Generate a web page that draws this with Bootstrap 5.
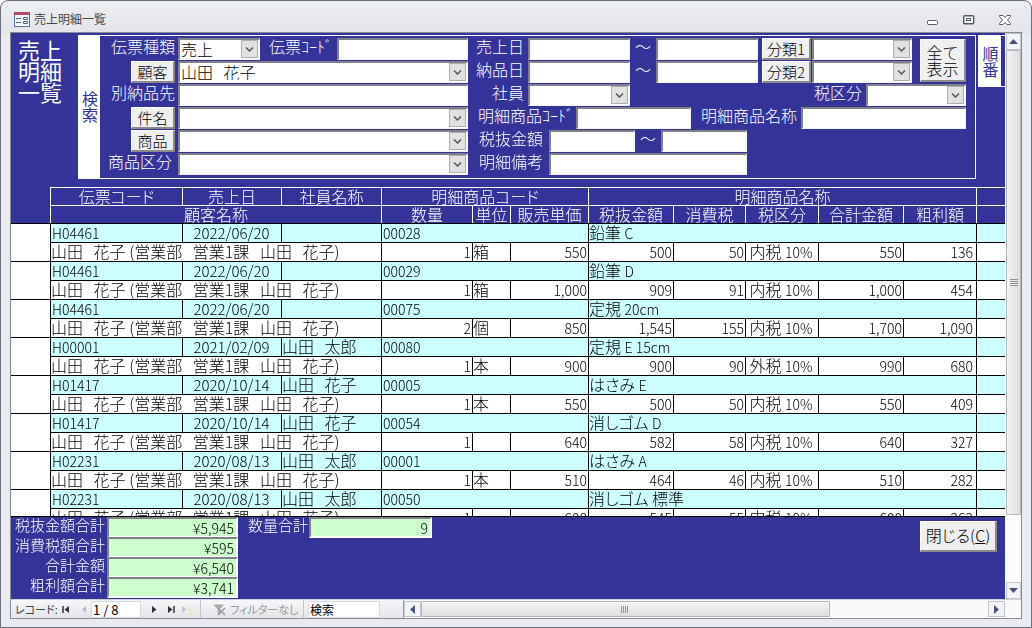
<!DOCTYPE html>
<html lang="ja">
<head>
<meta charset="utf-8">
<meta name="viewport" content="width=device-width, initial-scale=1">
<title>売上明細一覧</title>
<link href="https://cdn.jsdelivr.net/npm/bootstrap@5.3.0/dist/css/bootstrap.min.css" rel="stylesheet">
<style>
  :root { --navy: #333399; --mint: #ccffcc; --aqua: #ccffff; --face: #efefef; }
  html, body { height: 100%; }
  body { background: #fff; color: #000; font-family: "Noto Sans CJK JP", sans-serif; font-size: 16px; font-weight: 300; line-height: 16px; }
  button, input, select { font: inherit; color: inherit; }
  .win { height: 100vh; border: 1px solid #68707c; border-radius: 8px 8px 0 0; background: linear-gradient(#eceef1, #e3e5ea 32px, #e9ebf0 33px); padding: 0 9px 8px; }
  .titlebar { height: 31px; font-size: 12px; font-weight: 400; color: #444; padding: 5px 11px 0 4px; }
  .wbtn { border: 0; background: none; padding: 0; width: 12px; height: 12px; display: flex; margin-top: 2px; }
  .client { border: 1px solid #868b98; background: #fff; min-height: 0; }
  .upper { min-height: 0; }
  .sheet { background: var(--navy); color: #fff; min-width: 0; }

  /* search header */
  .headband { height: 154px; padding-top: 2px; }
  .bigtitle { width: 67px; font-size: 22px; font-weight: 400; line-height: 21px; padding: 4px 12px 0 7px; margin: 0; }
  .vtab { background: #fff; color: #333399; font-weight: 400; text-align: center; }
  .vtab-search { width: 22px; height: 144px; padding: 55px 2px 0 4px; }
  .vtab-order { width: 23px; height: 52px; padding: 10px 2px 0 4px; margin-top: -1px; }
  .searchbox { height: 144px; border: 1px solid #fff; border-left: 0; padding-top: 2px; }
  .orderbox { border: 1px solid #fff; border-width: 1px 0; height: 52px; width: 27px; margin-left: 2px; }
  .pane { display: grid; row-gap: 1px; align-content: start; }
  .pane-left { width: 368px; margin-right: 1px; }
  .pane-right { width: 497px; }
  .frow { display: flex; height: 22px; align-items: stretch; }
  .frow > label, .tilde { white-space: nowrap; }
  .fld { border: 2px solid; border-color: #80808a #f4f4f8 #f4f4f8 #80808a; border-right-width: 1px; border-bottom-width: 1px; background: #fff; color: #000; border-radius: 0; padding: 0 0 2px 1px; height: 22px; min-width: 0; outline: 0; }
  .dd { appearance: none; padding-right: 20px; background: #fff url("data:image/svg+xml,%3Csvg xmlns='http://www.w3.org/2000/svg' width='17' height='18'%3E%3Crect x='.5' y='.5' width='16' height='17' fill='%23e1e1e1' stroke='%23adadad'/%3E%3Cpath d='M5 7.500l3.500 3.500L12 7.500' fill='none' stroke='%23555' stroke-width='1.500'/%3E%3C/svg%3E") no-repeat right 1px top 0; }
  .push { background: var(--face); color: #000; border: 1px solid; border-color: #fff #8a8a8a #8a8a8a #fff; border-bottom-width: 2px; border-right-width: 2px; border-radius: 0; padding: 0; }
  .keyed { margin-left: 3px; }
  .w-key { width: 75px; text-align: right; }
  .keybtn { width: 44px; height: 22px; font-size: 15px; }
  .slip { padding: 0 4px 0 9px; }
  .w-0x { width: 0; }
  .wide { padding-right: 3px; }
  .w-mid { width: 59px; text-align: right; padding-right: 4px; }
  .tilde { width: 26px; text-align: center; }
  .w-s { width: 82px; }
  .w-date { width: 102px; }
  .w-opt { width: 100px; }
  .w-num { width: 86px; }
  .w-code { width: 115px; }
  .w-cls { width: 49px; margin: 0 1px 0 4px; font-size: 15px; }
  .w-long { width: 107px; padding-left: 9px; }
  .w-amt { width: 80px; padding-left: 10px; }
  .w-name { width: 165px; }
  .w-note { width: 198px; }
  .showall { width: 46px; height: 43px; margin: 1px 0 0 8px; }
  .pk { font-feature-settings: "palt"; }

  /* detail grid */
  .grid-table { width: 100%; table-layout: fixed; border-collapse: separate; border-spacing: 0; }
  .grid-table th, .grid-table td { padding: 0; font-weight: 300; border: 0 solid #000; border-width: 1px 0 0 1px; white-space: pre; vertical-align: top; }
  .grid-table thead th { border-color: #fff; height: 18px; line-height: 17px; text-align: center; }
  .grid-table .gutter { border-left: 0; }
  .grid-table thead .gutter { border-top: 0; }
  .grid-table tbody { color: #000; background: #fff; }
  .grid-table tbody td { height: 19px; line-height: 16px; }
  .grid-table tbody tr.top td:not(.gutter) { background: var(--aqua); }
  .grid-table tbody .n { text-align: right; font-size: 14px; line-height: 18px; padding-right: 1px; }
  .grid-table tbody .code { font-size: 14px; line-height: 18px; padding-left: 1px; }
  .grid-table tbody .date { text-align: center; font-size: 15px; padding-right: 1px; line-height: 18px; }
  .grid-table .sm { font-size: 14px; }
  .grid-table tbody .end { padding-right: 3px; }
  .records { flex: 1 1 0; min-height: 0; overflow: hidden; }

  /* totals */
  .foot { height: 83px; border-top: 1px solid #000; font-size: 15px; }
  .sumlabel { width: 94px; text-align: right; }
  .sum { display: block; height: 21px; border: 2px solid; border-color: #80808a #fff #fff #80808a; background: var(--mint); color: #000; text-align: right; font-size: 14px; padding: 0 2px 0 0; border-radius: 0; }
  .w-sum { width: 131px; margin-left: 2px; }
  .w-qty { width: 123px; }
  .srow { display: flex; height: 20px; }
  .qty { padding: 0 1px 0 10px; }
  .closebtn { width: 77px; height: 31px; margin: 4px 8px 0 0; padding-bottom: 3px; font-size: 16px; }

  /* record navigation and scroll bars */
  .navbarlow { height: 19px; background: linear-gradient(#f6f7f9, #e3e5ea); color: #444; font-size: 12px; font-weight: 400; border-top: 1px solid #cfd2da; }
  .navbarlow input { border: 1px solid #d5d8df; background: #fff; height: 17px; padding: 0 1px; color: #000; outline: 0; }
  .navbarlow button { border: 0; background: none; padding: 0; display: flex; }
  .recnav { width: 392px; flex: none; }
  .reclabel { width: 45px; padding-left: 4px; font-size: 11px; white-space: nowrap; }
  .recnav > button { margin-left: 6px; }
  .recnav > .b2 { margin-left: 12px; margin-right: 5px; }
  .recnav > .b3, .recnav > .b4 { margin-left: 11px; }
  .recnav > .b5 { margin-right: 4px; }
  .recnav > .recno { width: 50px; font-size: 13px; }
  .recnav > .find { width: 72px; margin-left: 4px; }
  .recnav > .filter { width: 80px; margin: 0 11px; gap: 4px; color: #999; align-items: center; font-size: 11px; white-space: nowrap; }
  .vline { width: 1px; height: 18px; background: #c5c8d0; }
  .sbtn { border: 1px solid #c3c5cc; background: #f3f4f6; padding: 0; display: flex; align-items: center; justify-content: center; }
  .vscroll .sbtn { height: 17px; }
  .navbarlow .hscroll .sbtn { width: 17px; border: 1px solid #c3c5cc; background: #f3f4f6; }
  .thumb { border: 1px solid #b4b6bc; border-radius: 1px; display: flex; align-items: center; justify-content: center; }
  .vscroll { width: 16px; flex: none; padding-left: 1px; background: #fcfcfd; }
  .vscroll .thumb { background: linear-gradient(90deg, #f5f5f5, #dedee0); flex: 0 1 465px; }
  .hscroll { background: #fafafb; border-left: 1px solid #9a9ea8; height: 18px; padding: 1px 0; }
  .hscroll .thumb { background: linear-gradient(#f5f5f5, #dedee0); width: 68%; }
  .corner { width: 16px; height: 18px; flex: none; background: #fafafb; }
</style>
</head>
<body>
<div class="win d-flex flex-column">
  <header class="titlebar d-flex align-items-center">
    <svg width="16" height="15" viewBox="0 0 16 15" aria-hidden="true"><rect x=".5" y=".5" width="15" height="14" fill="#f4f8ff" stroke="#5a6fa5"/><path d="M0 0h16v3H0z" fill="#b5476b"/><path d="M2 6.500h5M2 10.500h5" stroke="#4a6599"/><path d="M9.500 5.500h4v2h-4zM9.500 9.500h4v2h-4z" fill="none" stroke="#4a6599"/></svg>
    <span class="ms-1 flex-grow-1">売上明細一覧</span>
    <button class="wbtn me-4" aria-label="最小化"><svg width="12" height="12"><rect x=".5" y="6.500" width="10" height="4" rx="1" fill="#fff" stroke="#555b66"/></svg></button>
    <button class="wbtn me-4" aria-label="最大化"><svg width="12" height="12"><rect x=".7" y="1.700" width="10" height="8" rx="1" fill="#fff" stroke="#555b66" stroke-width="1.400"/><rect x="3.500" y="4.500" width="4" height="2" fill="none" stroke="#555b66"/></svg></button>
    <button class="wbtn" aria-label="閉じる"><svg width="12" height="12"><path d="M.5 1.500H4l2 2 2-2h3.500v1L8.500 6l3 3.500v1H8l-2-2-2 2H.5v-1L3.500 6l-3-3.500z" fill="#fff" stroke="#555b66"/></svg></button>
  </header>
  <div class="client d-flex flex-column flex-grow-1">
    <div class="upper d-flex flex-grow-1">
      <main class="sheet d-flex flex-column flex-grow-1">
        <form class="headband d-flex">
          <h1 class="bigtitle">売上明細一覧</h1>
          <div class="vtab vtab-search">検索</div>
          <div class="searchbox d-flex flex-grow-1">
            <div class="pane pane-left">
              <div class="frow"><label class="w-key" for="kind">伝票種類</label><select id="kind" class="fld dd w-s keyed"><option>売上</option></select><label class="slip" for="slip">伝票ｺｰﾄﾞ</label><input id="slip" class="fld flex-grow-1 w-0x"></div>
              <div class="frow"><span class="w-key"><button type="button" class="push keybtn">顧客</button></span><select aria-label="顧客" class="fld dd keyed flex-grow-1"><option>山田&nbsp;&nbsp;&nbsp;花子</option></select></div>
              <div class="frow"><label class="w-key" for="dest">別納品先</label><input id="dest" class="fld keyed flex-grow-1"></div>
              <div class="frow"><span class="w-key"><button type="button" class="push keybtn">件名</button></span><select aria-label="件名" class="fld dd keyed flex-grow-1"><option></option></select></div>
              <div class="frow"><span class="w-key"><button type="button" class="push keybtn">商品</button></span><select aria-label="商品" class="fld dd keyed flex-grow-1"><option></option></select></div>
              <div class="frow"><label class="w-key wide" for="cat">商品区分</label><select id="cat" class="fld dd keyed flex-grow-1"><option></option></select></div>
            </div>
            <div class="pane pane-right">
              <div class="d-flex">
                <div class="pane">
                  <div class="frow"><label class="w-mid" for="d1">売上日</label><input id="d1" class="fld w-date"><span class="tilde">～</span><input aria-label="売上日まで" class="fld w-date"><button type="button" class="push w-cls">分類1</button><select aria-label="分類1" class="fld dd w-opt"><option></option></select></div>
                  <div class="frow"><label class="w-mid" for="d2">納品日</label><input id="d2" class="fld w-date"><span class="tilde">～</span><input aria-label="納品日まで" class="fld w-date"><button type="button" class="push w-cls">分類2</button><select aria-label="分類2" class="fld dd w-opt"><option></option></select></div>
                </div>
                <button type="button" class="push showall">全て<br>表示</button>
              </div>
              <div class="frow"><label class="w-mid" for="emp">社員</label><select id="emp" class="fld dd w-date"><option></option></select><label class="ms-auto pe-1" for="tax">税区分</label><select id="tax" class="fld dd w-opt"><option></option></select></div>
              <div class="frow"><label class="w-long" for="icode">明細商品ｺｰﾄﾞ</label><input id="icode" class="fld w-code" autofocus><label class="ms-auto pe-1" for="iname">明細商品名称</label><input id="iname" class="fld w-name"></div>
              <div class="frow"><label class="w-amt" for="amt">税抜金額</label><input id="amt" class="fld w-num"><span class="tilde">～</span><input aria-label="税抜金額まで" class="fld w-num"></div>
              <div class="frow"><label class="w-amt" for="note">明細備考</label><input id="note" class="fld w-note"></div>
            </div>
          </div>
          <div class="orderbox"><div class="vtab vtab-order">順番</div></div>
        </form>
        <div class="records">
          <table class="grid-table">
            <colgroup id="cols"></colgroup>
            <thead>
              <tr><th class="gutter" rowspan="2"></th><th class="pk">伝票コード</th><th>売上日</th><th>社員名称</th><th class="pk" colspan="3">明細商品コード</th><th colspan="5">明細商品名称</th><th></th></tr>
              <tr><th colspan="3">顧客名称</th><th>数量</th><th>単位</th><th>販売単価</th><th>税抜金額</th><th>消費税</th><th>税区分</th><th>合計金額</th><th>粗利額</th><th></th></tr>
            </thead>
            <tbody id="rows"></tbody>
          </table>
        </div>
        <footer class="foot d-flex">
          <div>
            <div class="srow"><label class="sumlabel" for="s1">税抜金額合計</label><input id="s1" readonly class="sum w-sum" value="¥5,945"></div>
            <div class="srow"><label class="sumlabel" for="s2">消費税額合計</label><input id="s2" readonly class="sum w-sum" value="¥595"></div>
            <div class="srow"><label class="sumlabel" for="s3">合計金額</label><input id="s3" readonly class="sum w-sum" value="¥6,540"></div>
            <div class="srow"><label class="sumlabel" for="s4">粗利額合計</label><input id="s4" readonly class="sum w-sum" value="¥3,741"></div>
          </div>
          <label class="qty" for="s5">数量合計</label><input id="s5" readonly class="sum w-qty" value="9">
          <button type="button" class="push closebtn ms-auto pk">閉じる(<u>C</u>)</button>
        </footer>
      </main>
      <div class="vscroll d-flex flex-column">
        <button class="sbtn" aria-label="上へ"><svg width="9" height="5"><path d="M0 5l4.500-5L9 5z" fill="#46537c"/></svg></button>
        <div class="thumb"><svg width="8" height="8"><path d="M0 .5h8M0 2.500h8M0 4.500h8M0 6.500h8" stroke="#909090"/></svg></div>
        <button class="sbtn mt-auto" aria-label="下へ"><svg width="9" height="5"><path d="M0 0l4.500 5L9 0z" fill="#46537c"/></svg></button>
      </div>
    </div>
    <div class="navbarlow d-flex align-items-center">
      <div class="recnav d-flex align-items-center">
        <span class="pk reclabel">レコード:</span>
        <button aria-label="先頭"><svg width="8" height="7"><path d="M1 0v7" stroke="#333" stroke-width="1.500"/><path d="M7 0v7L2.500 3.500z" fill="#333"/></svg></button>
        <button class="b2" aria-label="前へ"><svg width="4" height="7"><path d="M4 0v7L0 3.500z" fill="#b9bcc4"/></svg></button>
        <input class="recno" aria-label="レコード番号" value="1 / 8">
        <button class="b3" aria-label="次へ"><svg width="5" height="7"><path d="M0 0v7l4.500-3.500z" fill="#333"/></svg></button>
        <button class="b4" aria-label="最後"><svg width="8" height="7"><path d="M6 0v7" stroke="#333" stroke-width="1.500"/><path d="M0 0v7l4.500-3.500z" fill="#333"/></svg></button>
        <button class="b5" aria-label="新規"><svg width="14" height="9"><path d="M0 1v7l4.500-3.500z" fill="#c3c6cc"/><path d="M9 0v9M5 4.500h9M6 1.500l6 6M12 1.500l-6 6" stroke="#efe6c4"/></svg></button>
        <span class="vline"></span>
        <button class="filter pk"><svg class="flex-shrink-0" width="14" height="13"><path d="M1 1.500h11L8 6v6L5.500 10V6z" fill="#aaa"/><path d="M6 5l7 7M13 5l-7 7" stroke="#999" stroke-width="1.500"/></svg>フィルターなし</button>
        <span class="vline"></span>
        <input class="find" aria-label="検索" value="検索">
      </div>
      <div class="hscroll d-flex flex-grow-1">
        <button class="sbtn" aria-label="左へ"><svg width="5" height="9"><path d="M5 0v9L0 4.500z" fill="#46537c"/></svg></button>
        <div class="thumb"><svg width="8" height="7"><path d="M.5 0v7M2.500 0v7M4.500 0v7M6.500 0v7" stroke="#909090"/></svg></div>
        <button class="sbtn ms-auto" aria-label="右へ"><svg width="5" height="9"><path d="M0 0v9l5-4.500z" fill="#46537c"/></svg></button>
      </div>
      <div class="corner"></div>
    </div>
  </div>
</div>
<script>
  // column widths, turned into shares of the full table width
  const widths = [39,132,99,100,91,38,78,85,72,73,85,73,29];
  const total = widths.reduce((a, b) => a + b);
  document.getElementById('cols').innerHTML = widths.map(w => `<col style="width:${w / total * 100}%">`).join('');
  const person = '山田   花子 (営業部   営業1課   山田   花子)';
  const data = [
    ['H04461','2022/06/20','','00028','鉛筆 C','1','箱','550','500','50','内税','550','136'],
    ['H04461','2022/06/20','','00029','鉛筆 D','1','箱','1,000','909','91','内税','1,000','454'],
    ['H04461','2022/06/20','','00075','定規 20cm','2','個','850','1,545','155','内税','1,700','1,090'],
    ['H00001','2021/02/09','山田   太郎','00080','定規 E 15cm','1','本','900','900','90','外税','990','680'],
    ['H01417','2020/10/14','山田   花子','00005','はさみ E','1','本','550','500','50','内税','550','409'],
    ['H01417','2020/10/14','山田   花子','00054','消しゴム D','1','','640','582','58','内税','640','327'],
    ['H02231','2020/08/13','山田   太郎','00001','はさみ A','1','本','510','464','46','内税','510','282'],
    ['H02231','2020/08/13','山田   太郎','00050','消しゴム 標準','1','','600','545','55','内税','600','262']
  ];
  document.getElementById('rows').innerHTML = data.map(d =>
    `<tr class="top"><td class="gutter" rowspan="2"></td><td class="code">${d[0]}</td><td class="date">${d[1]}</td><td>${d[2]}</td><td class="code" colspan="3">${d[3]}</td><td class="pk" colspan="5">${d[4].replace(/[A-Z0-9].*$/, s => `<span class="sm">${s}</span>`)}</td><td></td></tr>` +
    `<tr><td colspan="3">${person}</td><td class="n">${d[5]}</td><td>${d[6]}</td><td class="n">${d[7]}</td><td class="n">${d[8]}</td><td class="n">${d[9]}</td><td> ${d[10]} <span class="sm">10%</span></td><td class="n">${d[11]}</td><td class="n end">${d[12]}</td><td></td></tr>`).join('');
</script>
<script src="https://cdn.jsdelivr.net/npm/bootstrap@5.3.0/dist/js/bootstrap.bundle.min.js"></script>
</body>
</html>
